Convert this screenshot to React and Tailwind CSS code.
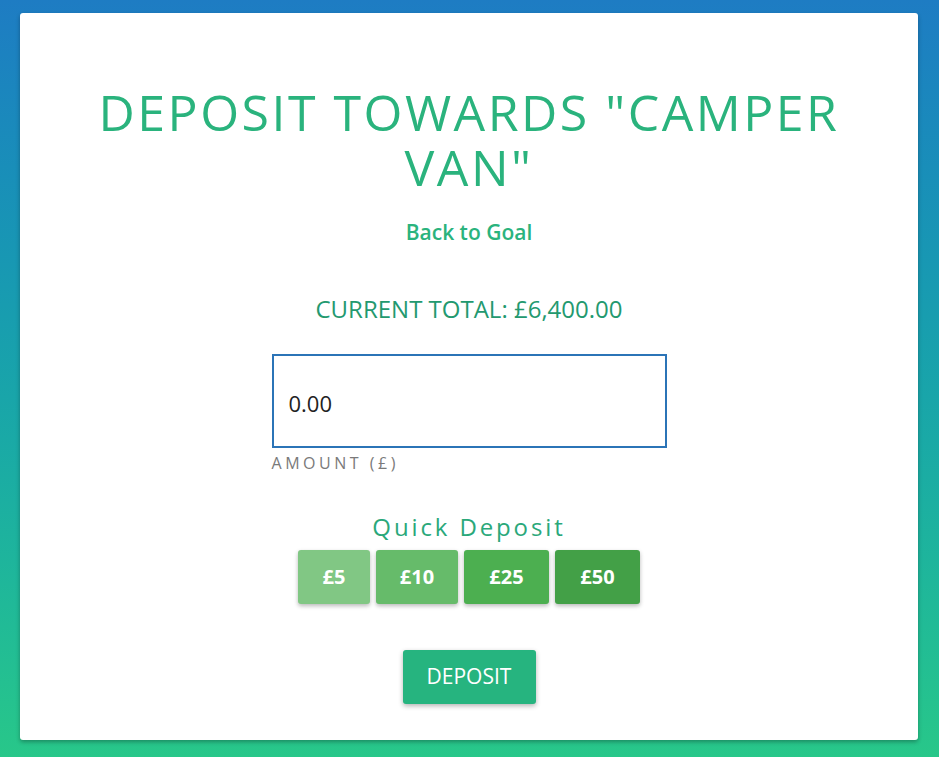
import React from "react";

export default function App() {
  const quick = [
    { label: "£5", cls: "w-[72px] bg-[#81c784]" },
    { label: "£10", cls: "w-[82px] bg-[#66bb6a]" },
    { label: "£25", cls: "w-[85px] bg-[#4caf50]" },
    { label: "£50", cls: "w-[85px] bg-[#43a047]" },
  ];
  return (
    <div
      className="min-h-screen w-full bg-gradient-to-b from-[#1e7cc3] to-[#28c789] pt-[13px] pb-[17px] pl-[20px] pr-[21px]"
      style={{ fontFamily: '"Open Sans", "Noto Sans", sans-serif' }}
    >
      <div className="bg-white rounded-[3px] shadow-[0_2px_4px_rgba(0,0,0,0.3)] flex flex-col items-center pt-[72px] pb-[36px] h-[727px]">
        <h1 className="text-[#2ab37d] text-[50px] leading-[55px] tracking-[0.05em] font-normal text-center">
          DEPOSIT TOWARDS "CAMPER
          <br />
          VAN"
        </h1>
        <a className="mt-[25px] text-[#2ab37d] text-[21px] leading-[24px] font-semibold">
          Back to Goal
        </a>
        <div className="mt-[49px] text-[#23996f] text-[24px] leading-[32px]">
          CURRENT TOTAL: £6,400.00
        </div>
        <div className="mt-[29px] w-[395px] flex flex-col">
          <div className="h-[94px] border-2 border-[#2b74b7] flex items-center px-[15px] pt-[4px]">
            <span className="text-[#222] text-[22px]">0.00</span>
          </div>
          <div className="mt-[5px] text-[#7a7a7a] text-[16px] leading-[20px] tracking-[0.22em] font-normal">
            AMOUNT (£)
          </div>
        </div>
        <div className="mt-[40px] text-[#2aa87a] text-[24px] leading-[28px] tracking-[0.12em]">
          Quick Deposit
        </div>
        <div className="mt-[9px] flex gap-[6px]">
          {quick.map((q) => (
            <div
              key={q.label}
              className={`${q.cls} h-[54px] rounded-[3px] flex items-center justify-center text-white text-[20px] font-bold shadow-[0_2px_4px_rgba(0,0,0,0.28)]`}
            >
              {q.label}
            </div>
          ))}
        </div>
        <div className="mt-[46px] w-[133px] h-[54px] rounded-[3px] bg-[#26b47f] flex items-center justify-center text-white text-[21px] shadow-[0_2px_5px_rgba(0,0,0,0.3)]">
          DEPOSIT
        </div>
      </div>
    </div>
  );
}
